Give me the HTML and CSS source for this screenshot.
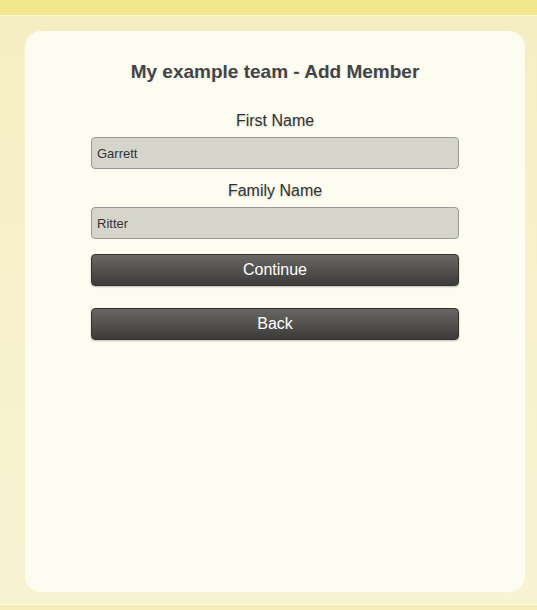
FILE: index.html
```html
<!DOCTYPE html>
<html lang="en">
<head>
  <meta charset="UTF-8" />
  <title>Add Member</title>
  <link rel="stylesheet" href="styles.css">
</head>
<body>
  <div class="topbar"></div>
  <div class="page">
    <div class="card">
      <h2>My example team - Add Member</h2>
      <form class="member-form">
        <label for="firstName">First Name</label>
        <input type="text" id="firstName" value="Garrett" />
        <label for="familyName">Family Name</label>
        <input type="text" id="familyName" value="Ritter" />
        <button type="button" class="btn">Continue</button>
        <button type="button" class="btn back">Back</button>
      </form>
    </div>
  </div>
  <div class="bottombar"></div>
</body>
</html>
```

FILE: styles.css
```css
html, body {
  height: 100%;
}
body {
  font-family: 'Liberation Sans', Arial, Helvetica, sans-serif;
  margin: 0;
  padding: 0;
  display: flex;
  flex-direction: column;
  background: #f6efc4;
}
.topbar {
  height: 15px;
  background: #f2e78c;
  border-bottom: 1px solid #fdf9d6;
}
.page {
  flex: 1;
  padding: 15px 12px 12px 25px;
  background: linear-gradient(#f6eec3, #f8f3d3);
}
.bottombar {
  height: 5px;
  background: #f5edb8;
  border-top: 1px solid #fefbe0;
}
.card {
  width: 500px;
  height: 561px;
  box-sizing: border-box;
  background: #fdfcf0;
  border-radius: 16px;
  padding: 30px 66px 0;
}
h2 {
  margin: 0 0 29px;
  text-align: center;
  font-size: 19px;
  font-weight: bold;
  color: #444;
  text-shadow: 0 1px 1px #fff, 0 1px 2px rgba(0,0,0,0.15);
}
.member-form {
  display: flex;
  flex-direction: column;
}
label {
  text-align: center;
  font-size: 16px;
  color: #333;
  line-height: 18px;
  margin-bottom: 7px;
  text-shadow: 0 1px 2px rgba(0,0,0,0.2);
}
input {
  height: 32px;
  box-sizing: border-box;
  background: #d6d5cc;
  border: 1px solid #999;
  border-radius: 4px;
  padding: 0 5px;
  font-family: inherit;
  font-size: 13px;
  color: #333;
  margin-bottom: 13px;
}
.btn {
  height: 32px;
  border: 1px solid #333;
  border-radius: 4px;
  background: linear-gradient(#696764, #3c3b39);
  color: #fff;
  font-family: inherit;
  font-size: 16px;
  cursor: pointer;
  margin-top: 2px;
  box-shadow: 0 1px 2px rgba(0,0,0,0.25);
}
.back {
  margin-top: 22px;
}
```
